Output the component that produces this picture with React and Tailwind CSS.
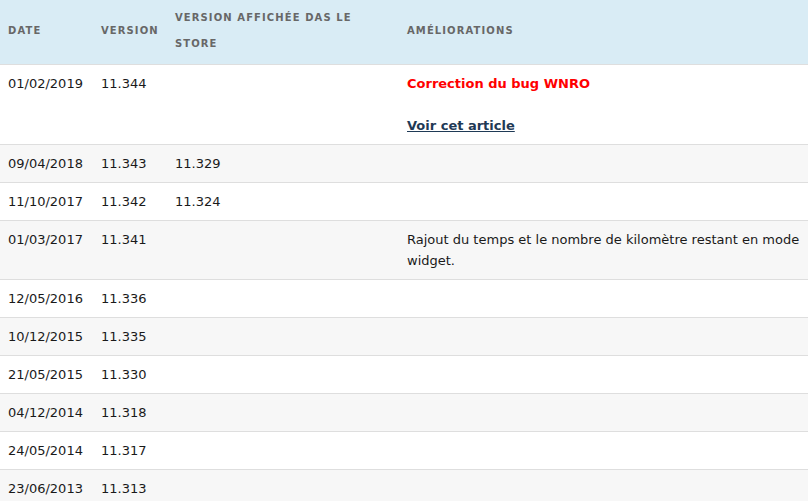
import React from "react";

const rows = [
  { d: "01/02/2019", v: "11.344", s: "", special: true },
  { d: "09/04/2018", v: "11.343", s: "11.329" },
  { d: "11/10/2017", v: "11.342", s: "11.324" },
  { d: "01/03/2017", v: "11.341", s: "", a: "Rajout du temps et le nombre de kilomètre restant en mode widget." },
  { d: "12/05/2016", v: "11.336", s: "" },
  { d: "10/12/2015", v: "11.335", s: "" },
  { d: "21/05/2015", v: "11.330", s: "" },
  { d: "04/12/2014", v: "11.318", s: "" },
  { d: "24/05/2014", v: "11.317", s: "" },
  { d: "23/06/2013", v: "11.313", s: "" },
];

export default function App() {
  return (
    <div className="w-[808px] h-[501px] overflow-hidden bg-white" style={{ fontFamily: "Verdana, 'DejaVu Sans', sans-serif" }}>
      <table className="w-[808px] table-fixed border-collapse text-[13px] leading-[21px] text-[#1a1a1a]">
        <colgroup>
          <col className="w-[93px]" />
          <col className="w-[74px]" />
          <col className="w-[232px]" />
          <col />
        </colgroup>
        <thead>
          <tr className="bg-[#d9ecf5] border-b border-[#dedede]">
            {["Date", "Version", "Version affichée das le store", "Améliorations"].map((h) => (
              <th key={h} className="text-left align-middle px-2 pt-[5px] pb-[7px] text-[10px] leading-[26px] font-bold uppercase tracking-[1.1px] text-[#676767]">
                {h}
              </th>
            ))}
          </tr>
        </thead>
        <tbody>
          {rows.map((r, i) => (
            <tr key={r.d} className={`border-b border-[#dedede] ${i % 2 === 1 ? "bg-[#f7f7f7]" : "bg-white"}`}>
              <td className="align-top px-2 py-2">{r.d}</td>
              <td className="align-top px-2 py-2">{r.v}</td>
              <td className="align-top px-2 py-2">{r.s}</td>
              <td className="align-top px-2 py-2">
                {r.special ? (
                  <>
                    <p className="mb-[21px] font-bold text-[#ff0000]">Correction du bug WNRO</p>
                    <p><a href="#" className="font-bold text-[#1f3a56] underline">Voir cet article</a></p>
                  </>
                ) : (
                  r.a
                )}
              </td>
            </tr>
          ))}
        </tbody>
      </table>
    </div>
  );
}
